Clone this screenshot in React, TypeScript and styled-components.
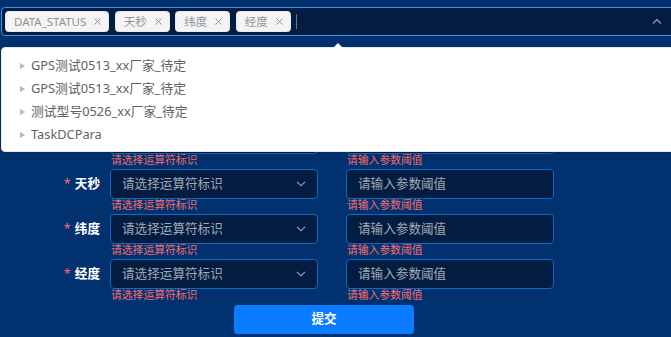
import React from "react";
import styled, { createGlobalStyle } from "styled-components";

const Global = createGlobalStyle`
  html, body { margin: 0; padding: 0; background: #01326f; overflow: hidden; }
  body { font-family: "Noto Sans", "Noto Sans CJK SC", sans-serif; }
  * { box-sizing: border-box; }
`;

const Page = styled.div`
  position: relative;
  width: 671px;
  height: 337px;
  overflow: hidden;
  padding: 7px 0 0 1px;
  background: #01326f;
`;

const MultiSelect = styled.div`
  width: calc(100% + 4px);
  height: 29px;
  border: 1px solid #4193e6;
  border-radius: 4px;
  background: #021d41;
  display: flex;
  align-items: center;
  padding: 0 12px 0 3px;
  gap: 5.5px;
`;

const Tag = styled.span`
  display: inline-flex;
  align-items: center;
  height: 21px;
  padding: 0 7px 0 8px;
  background: #f4f4f5;
  border: 1px solid #e9e9eb;
  border-radius: 3.6px;
  color: #909399;
  font-size: 11.5px;
  line-height: 1;
  white-space: nowrap;
`;

const TagClose = styled.svg`
  width: 7px;
  height: 7px;
  margin-left: 8px;
`;

const Cursor = styled.span`
  width: 1px;
  height: 15px;
  background: #6b7685;
`;

const Spacer = styled.div`
  flex: 1;
`;

const Caret = styled.svg`
  width: 10px;
  height: 6px;
  margin-top: -2px;
`;

const Dropdown = styled.div`
  position: absolute;
  top: 47px;
  left: 1px;
  width: 690px;
  height: 105px;
  background: #fff;
  border: 1px solid #e4e7ed;
  border-radius: 4px;
  box-shadow: 0 2px 12px rgba(0, 0, 0, 0.12);
  padding: 6px 0;
  z-index: 5;
`;

const Arrow = styled.span`
  position: absolute;
  top: -5px;
  left: 331px;
  width: 0;
  height: 0;
  border-left: 5px solid transparent;
  border-right: 5px solid transparent;
  border-bottom: 5px solid #fff;
`;

const TreeNode = styled.div`
  display: flex;
  align-items: center;
  height: 23px;
  padding-left: 16px;
  color: #606266;
  font-size: 12.8px;
  line-height: 1;
`;

const NodeCaret = styled.span`
  width: 0;
  height: 0;
  border-top: 3.5px solid transparent;
  border-bottom: 3.5px solid transparent;
  border-left: 5px solid #b4b8bf;
  margin: 0 6px 0 2px;
`;

const Form = styled.div`
  display: flex;
  flex-direction: column;
  gap: 15px;
  margin-top: 88px;
  margin-left: -1px;
`;

const Row = styled.div`
  display: flex;
  align-items: center;
  height: 30px;
`;

const Label = styled.div`
  width: 110px;
  padding-right: 10px;
  text-align: right;
  color: #fff;
  font-weight: 700;
  font-size: 12.6px;
  line-height: 30px;
  white-space: nowrap;
  overflow: hidden;
`;

const Star = styled.span`
  color: #f56c6c;
  margin-right: 4px;
  font-weight: 400;
`;

const Field = styled.div`
  position: relative;
  width: 208px;
  height: 30px;
  border: 1px solid #0b6cc4;
  border-radius: 4px;
  background: #021d41;
  display: flex;
  align-items: center;
  padding: 0 11px;
  color: #a4a9b1;
  font-size: 12.6px;
  line-height: 1;
  & + & {
    margin-left: 28px;
  }
`;

const Error = styled.div`
  position: absolute;
  top: 100%;
  left: 0;
  padding-top: 2px;
  color: #f56c6c;
  font-size: 10.8px;
  line-height: 1;
  white-space: nowrap;
`;

const Chevron = styled.svg`
  width: 10px;
  height: 6px;
  margin-left: auto;
`;

const ButtonRow = styled.div`
  margin-top: 16px;
  padding-left: 233px;
`;

const Submit = styled.button`
  width: 180px;
  height: 29px;
  border: none;
  border-radius: 3.6px;
  background: #0a7cff;
  color: #fff;
  font-family: inherit;
  font-size: 12.6px;
  font-weight: 700;
  line-height: 1;
  padding: 0;
`;

const tags = ["DATA_STATUS", "天秒", "纬度", "经度"];
const treeItems = [
  "GPS测试0513_xx厂家_待定",
  "GPS测试0513_xx厂家_待定",
  "测试型号0526_xx厂家_待定",
  "TaskDCPara",
];

const CloseIcon = () => (
  <TagClose viewBox="0 0 7 7">
    <path d="M0.5 0.5L6.5 6.5M6.5 0.5L0.5 6.5" stroke="#909399" strokeWidth="1" fill="none" />
  </TagClose>
);

export default function App() {
  return (
    <>
      <Global />
      <Page>
        <MultiSelect>
          {tags.map((t) => (
            <Tag key={t}>
              {t}
              <CloseIcon />
            </Tag>
          ))}
          <Cursor />
          <Spacer />
          <Caret viewBox="0 0 10 6">
            <path d="M1 5.5L5 1.5L9 5.5" stroke="#a4a9b1" strokeWidth="1.1" fill="none" />
          </Caret>
        </MultiSelect>

        <Dropdown>
          <Arrow />
          {treeItems.map((t, i) => (
            <TreeNode key={i}>
              <NodeCaret />
              {t}
            </TreeNode>
          ))}
        </Dropdown>

        <Form>
          {tags.map((t) => (
            <Row key={t}>
              <Label>
                <Star>*</Star>
                {t}
              </Label>
              <Field>
                请选择运算符标识
                <Chevron viewBox="0 0 10 6">
                  <path d="M1 0.8L5 4.8L9 0.8" stroke="#a4a9b1" strokeWidth="1.1" fill="none" />
                </Chevron>
                <Error>请选择运算符标识</Error>
              </Field>
              <Field>
                请输入参数阈值
                <Error>请输入参数阈值</Error>
              </Field>
            </Row>
          ))}
        </Form>

        <ButtonRow>
          <Submit>提交</Submit>
        </ButtonRow>
      </Page>
    </>
  );
}
